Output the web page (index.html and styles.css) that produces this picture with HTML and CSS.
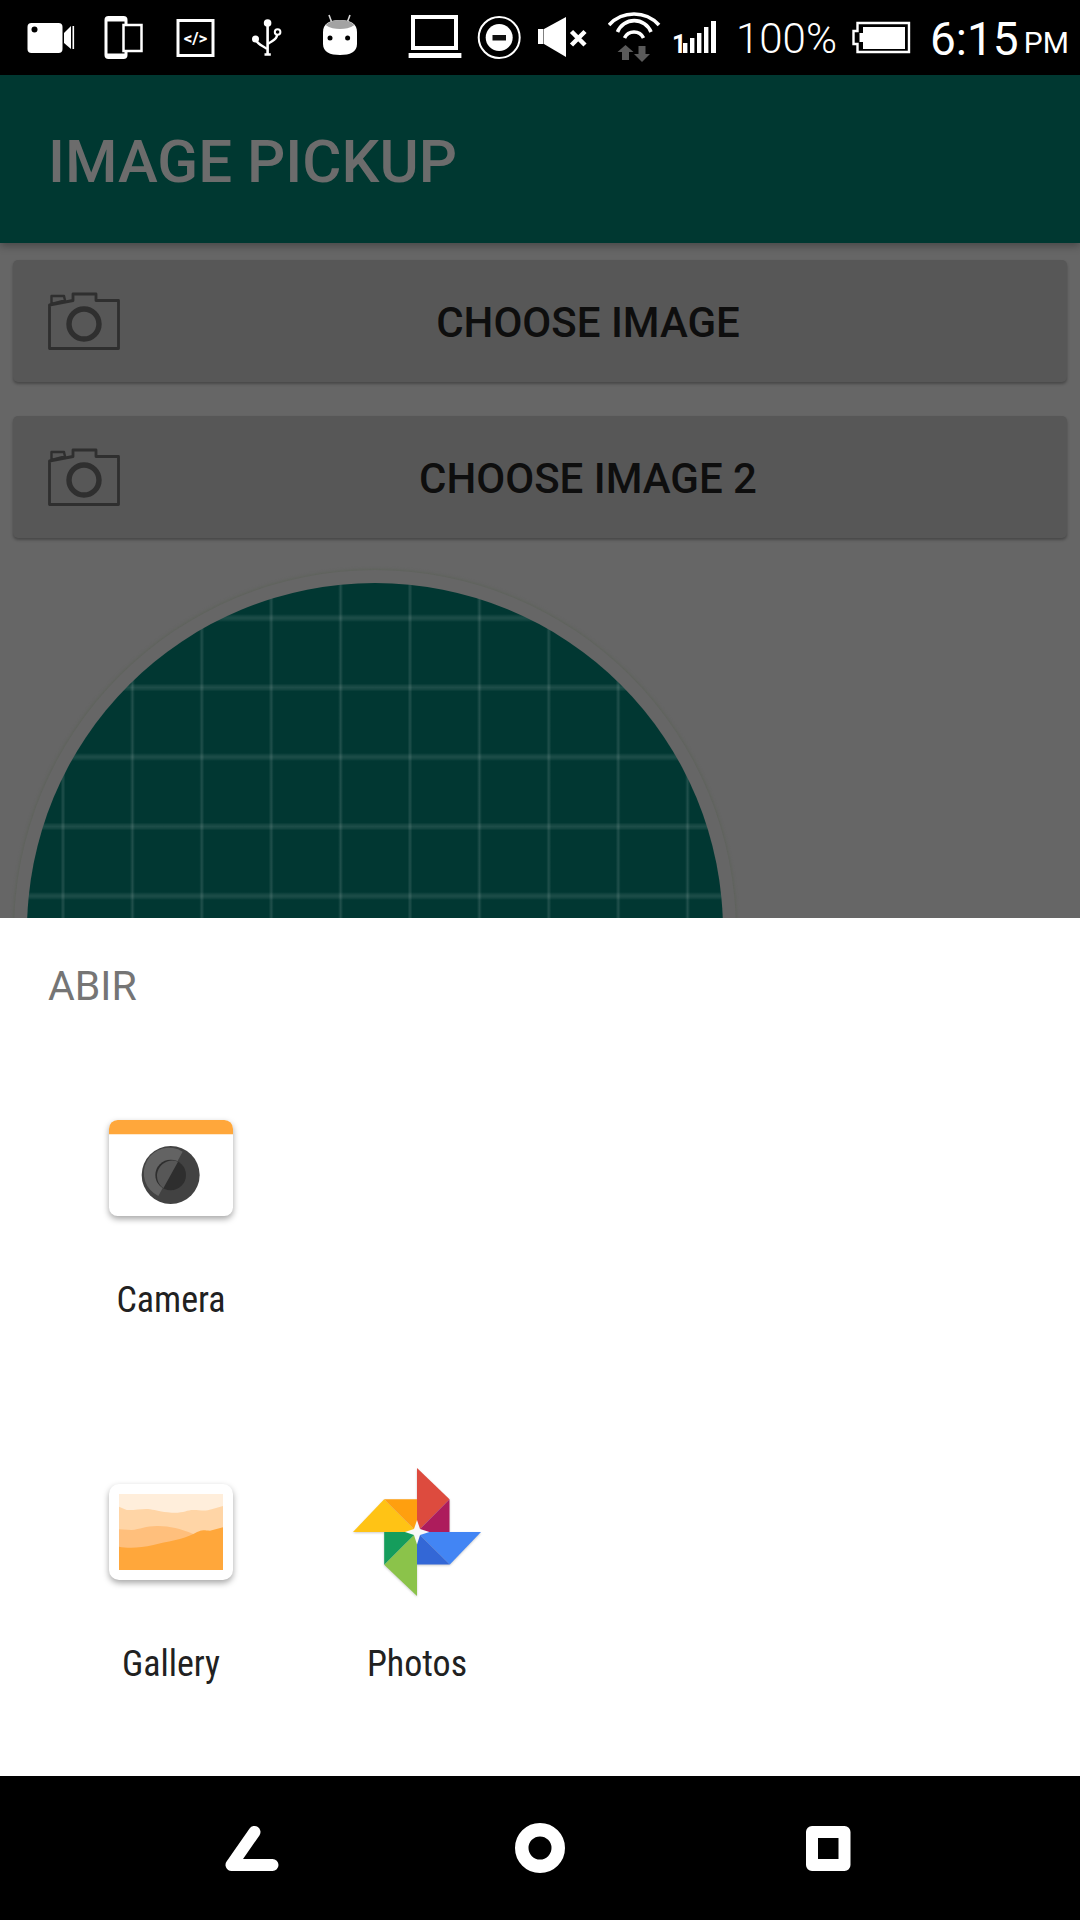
FILE: index.html
```html
<!DOCTYPE html>
<html lang="en">
<head>
    <meta charset="UTF-8">
    <meta name="viewport" content="width=device-width, initial-scale=1.0">
    <title>Image Pickup</title>
    <link rel="stylesheet" href="styles.css">
</head>
<body>
    <div class="status-bar">
        <svg class="st st-video" width="48" height="75" viewBox="0 0 48 75">
            <rect x="0.5" y="23" width="35" height="30" rx="4" fill="#fff"/>
            <circle cx="7.5" cy="29.5" r="3" fill="#000"/>
            <polygon points="37,33 44,26 44,49 37,43" fill="#fff"/>
            <rect x="45.5" y="26" width="1.6" height="23" fill="#fff"/>
        </svg>
        <svg class="st st-phone" width="39" height="75" viewBox="0 0 39 75">
            <rect x="0.5" y="16" width="23" height="43" rx="4" fill="#fff"/>
            <rect x="3.5" y="21.5" width="17" height="32" fill="#000"/>
            <rect x="19.5" y="25" width="18" height="26" fill="#000" stroke="#fff" stroke-width="2.5"/>
        </svg>
        <svg class="st st-code" width="39" height="75" viewBox="0 0 39 75">
            <rect x="2" y="20.5" width="35" height="35" fill="none" stroke="#fff" stroke-width="3"/>
            <text x="19.5" y="44" class="code-text">&lt;/&gt;</text>
        </svg>
        <svg class="st st-usb" width="30" height="75" viewBox="0 0 30 75">
            <circle cx="15.6" cy="23" r="3.8" fill="#fff"/>
            <path d="M15.6 24V54M12.5 54.5H18.8" stroke="#fff" stroke-width="2.6" fill="none"/>
            <circle cx="3.5" cy="39" r="3.5" fill="#fff"/>
            <path d="M4 40C6 45 12 46 15 49" stroke="#fff" stroke-width="2.4" fill="none"/>
            <circle cx="25.6" cy="32" r="2.8" fill="none" stroke="#fff" stroke-width="2"/>
            <path d="M25 35C25 40 19 41 16 44" stroke="#fff" stroke-width="2.4" fill="none"/>
        </svg>
        <svg class="st st-android" width="36" height="75" viewBox="0 0 36 75">
            <path d="M7 15L10 23M28 15L25 23" stroke="#d9d9d9" stroke-width="1.6"/>
            <path d="M1 32C1 24 7 20 18 20S35 24 35 32V44C35 52 28 55 18 55S1 52 1 44Z" fill="#fff"/>
            <path d="M3.5 25C7 21.5 12 20 18 20S29 21.5 32.5 25C28 28 23 29 18 29S8 28 3.5 25Z" fill="#a3a3a3"/>
            <circle cx="8" cy="38" r="2.5" fill="#000"/>
            <circle cx="25.6" cy="38" r="2.5" fill="#000"/>
        </svg>
        <svg class="st st-laptop" width="54" height="75" viewBox="0 0 54 75">
            <rect x="5" y="17" width="43" height="31" fill="none" stroke="#fff" stroke-width="4"/>
            <rect x="0.6" y="53" width="52.8" height="5" fill="#fff"/>
        </svg>
        <svg class="st st-dnd" width="45" height="75" viewBox="0 0 45 75">
            <circle cx="22.2" cy="37.5" r="20.5" fill="none" stroke="#fff" stroke-width="2"/>
            <circle cx="22.2" cy="37.5" r="13.5" fill="#fff"/>
            <rect x="15.5" y="35" width="13.5" height="5.5" fill="#111"/>
        </svg>
        <svg class="st st-mute" width="50" height="75" viewBox="0 0 50 75">
            <rect x="0" y="29" width="5.5" height="15" fill="#fff"/>
            <polygon points="6,29 28,17 28,57 6,44" fill="#fff"/>
            <path d="M33.5 31.5L47 45M47 31.5L33.5 45" stroke="#fff" stroke-width="4.5"/>
        </svg>
        <svg class="st st-wifi" width="53" height="75" viewBox="0 0 53 75">
            <path d="M1 25A34 34 0 0 1 51 25M9.5 32A18 18 0 0 1 43 32M16.5 38A10.5 10.5 0 0 1 35.5 38" fill="none" stroke="#fff" stroke-width="3.6"/>
            <path d="M9.5 52L17.5 45L25.5 52H21V60H14V52Z" fill="#5a5a5a"/>
            <path d="M26 54H30.5V46H37.5V54H42L34 62Z" fill="#5a5a5a"/>
        </svg>
        <svg class="st st-signal" width="45" height="75" viewBox="0 0 45 75">
            <text x="0" y="53" class="signal-text">1</text>
            <rect x="11" y="43" width="4.4" height="10" fill="#fff"/>
            <rect x="18" y="38" width="4.4" height="15" fill="#fff"/>
            <rect x="25" y="33" width="4.4" height="20" fill="#fff"/>
            <rect x="32" y="27" width="4.4" height="26" fill="#fff"/>
            <rect x="39" y="21" width="5" height="32" fill="#fff"/>
        </svg>
        <span class="st-percent">100%</span>
        <svg class="st st-battery" width="59" height="75" viewBox="0 0 59 75">
            <path d="M5.5 23H57V52H5.5V44H1.5V31H5.5Z" fill="none" stroke="#fff" stroke-width="2.4"/>
            <path d="M11 27H53V49H11V42H7.5V33H11Z" fill="#fff"/>
        </svg>
        <span class="st-time">6:15</span>
        <span class="st-ampm">PM</span>
    </div>

    <header class="app-bar">IMAGE PICKUP</header>

    <main class="content">
        <button class="pick-btn">
            <svg class="cam-icon" width="72" height="58" viewBox="0 0 72 58">
                <path d="M1.5 13V56.5H70.5V8.5H48V2H25V8.5Z" fill="none" stroke="#2f2f2f" stroke-width="2.8" stroke-linejoin="round"/>
                <path d="M3.5 12V4H16L17 8.5Z" fill="none" stroke="#2f2f2f" stroke-width="2.4" stroke-linejoin="round"/>
                <circle cx="36" cy="32" r="15" fill="none" stroke="#2f2f2f" stroke-width="5.4"/>
            </svg>
            <span class="pick-label">CHOOSE IMAGE</span>
        </button>
        <button class="pick-btn">
            <svg class="cam-icon" width="72" height="58" viewBox="0 0 72 58">
                <path d="M1.5 13V56.5H70.5V8.5H48V2H25V8.5Z" fill="none" stroke="#2f2f2f" stroke-width="2.8" stroke-linejoin="round"/>
                <path d="M3.5 12V4H16L17 8.5Z" fill="none" stroke="#2f2f2f" stroke-width="2.4" stroke-linejoin="round"/>
                <circle cx="36" cy="32" r="15" fill="none" stroke="#2f2f2f" stroke-width="5.4"/>
            </svg>
            <span class="pick-label">CHOOSE IMAGE 2</span>
        </button>
        <div class="preview"></div>
    </main>

    <section class="sheet">
        <div class="sheet-title">ABIR</div>
        <div class="app-grid">
            <div class="app-item">
                <div class="app-icon">
                    <svg class="icon-shadow" width="124" height="96" viewBox="57 60 372 288">
                        <rect x="57" y="60" width="372" height="288" rx="26" fill="#fff"/>
                        <path d="M57 103V86A26 26 0 0 1 83 60H403A26 26 0 0 1 429 86V103Z" fill="#ffa73b"/>
                        <circle cx="242" cy="225" r="87" fill="#424242"/>
                        <path d="M278 155A76 76 0 1 0 205 288Z" fill="#636363"/>
                        <circle cx="242" cy="225" r="46" fill="#2e2e2e"/>
                        <path d="M264 185A46 46 0 0 0 220 265Z" fill="#575757"/>
                    </svg>
                </div>
                <div class="app-name">Camera</div>
            </div>
            <div class="app-item app-item-first">
                <div class="app-icon">
                    <svg class="icon-shadow" width="124" height="96" viewBox="57 72 372 288">
                        <rect x="57" y="72" width="372" height="288" rx="30" fill="#fff"/>
                        <rect x="87" y="102" width="312" height="228" fill="#ffeedb"/>
                        <path d="M87 140L110 150C130 152 160 145 180 148S210 156 245 158S290 150 310 150S345 155 365 148L399 138V330H87Z" fill="#ffd5a6"/>
                        <path d="M87 208L125 210C150 208 170 197 205 198S270 205 310 222L330 330H87Z" fill="#ffbf7c"/>
                        <path d="M87 260C110 265 150 265 190 255S280 238 310 222S340 212 360 212L399 202V330H87Z" fill="#ffa73b"/>
                    </svg>
                </div>
                <div class="app-name">Gallery</div>
            </div>
            <div class="app-item">
                <div class="app-icon">
                    <svg class="icon-shadow-soft" width="128" height="128" viewBox="40 40 382 382">
                        <polygon points="231,40 328,133 231,231" fill="#dd4b3e"/>
                        <polygon points="328,133 328,231 231,231" fill="#ad1c5c"/>
                        <polygon points="422,231 329,328 231,231" fill="#4285f4"/>
                        <polygon points="329,328 231,328 231,231" fill="#3367d6"/>
                        <polygon points="231,422 133,329 231,231" fill="#8bc34a"/>
                        <polygon points="133,329 133,231 231,231" fill="#159d5c"/>
                        <polygon points="40,231 133,133 231,231" fill="#ffc315"/>
                        <polygon points="133,133 231,133 231,231" fill="#ff9f0f"/>
                        <polygon points="231,195 240,222 268,231 240,240 231,268 222,240 195,231 222,222" fill="#f8f8f8"/>
                    </svg>
                </div>
                <div class="app-name">Photos</div>
            </div>
        </div>
    </section>

    <nav class="nav-bar">
        <svg width="60" height="60" viewBox="0 0 60 60">
            <path d="M32.5 14L9.5 47H50.5" fill="none" stroke="#fff" stroke-width="12" stroke-linecap="round" stroke-linejoin="round"/>
        </svg>
        <svg width="60" height="60" viewBox="0 0 60 60">
            <circle cx="30" cy="30" r="18.25" fill="none" stroke="#fff" stroke-width="13.5"/>
        </svg>
        <svg width="60" height="60" viewBox="0 0 60 60">
            <rect x="14" y="14" width="32.5" height="33" fill="none" stroke="#fff" stroke-width="12" stroke-linejoin="round"/>
        </svg>
    </nav>
</body>
</html>
```

FILE: styles.css
```css
* {
    box-sizing: border-box;
}

body {
    font-family: Roboto, sans-serif;
    margin: 0;
    padding: 0;
    width: 1080px;
    height: 1920px;
    overflow: hidden;
    display: flex;
    flex-direction: column;
    background-color: #666;
}

/* status bar, every svg is 75px tall so the y values are the real ones */
.status-bar {
    height: 75px;
    background-color: #000;
    color: #fff;
    display: flex;
    align-items: center;
    padding-left: 27px;
    flex-shrink: 0;
}

.st {
    display: block;
    flex-shrink: 0;
}

.st-phone { margin-left: 29px; }
.st-code { margin-left: 33px; }
.st-usb { margin-left: 37px; }
.st-android { margin-left: 40px; }
.st-laptop { margin-left: 50px; }
.st-dnd { margin-left: 15px; }
.st-mute { margin-left: 16px; }
.st-wifi { margin-left: 20px; }
.st-signal { margin-left: 11px; }
.st-battery { margin-left: 14px; }

.code-text {
    font-family: Roboto, sans-serif;
    font-size: 17px;
    font-weight: 700;
    fill: #fff;
    text-anchor: middle;
}

.signal-text {
    font-family: Roboto, sans-serif;
    font-size: 25px;
    font-weight: 700;
    fill: #fff;
}

.st-percent {
    margin-left: 19px;
    margin-top: 2px;
    font-size: 42px;
    font-weight: 300;
    width: 102px;
    white-space: nowrap;
}

.st-time {
    margin-left: 19px;
    margin-top: 2px;
    font-size: 46px;
    font-weight: 400;
}

.st-ampm {
    margin-left: 5px;
    margin-top: 10px;
    font-size: 30px;
    font-weight: 400;
}

.app-bar {
    height: 168px;
    flex-shrink: 0;
    background-color: #003831;
    color: #6c6c6c;
    font-size: 60px;
    font-weight: 500;
    display: flex;
    align-items: center;
    padding: 4px 0 0 48px;
    box-shadow: 0 3px 8px rgba(0, 0, 0, 0.3);
    position: relative;
}

.content {
    height: 675px;
    flex-shrink: 0;
    overflow: hidden;
    padding: 17px 13px 0;
}

.pick-btn {
    width: 100%;
    height: 122px;
    margin: 0 0 34px;
    padding: 0 11px 0 35px;
    border: 0;
    border-radius: 5px;
    background-color: #575757;
    box-shadow: 0 2px 3px rgba(0, 0, 0, 0.3);
    display: flex;
    align-items: center;
    font-family: Roboto, sans-serif;
}

.cam-icon {
    flex-shrink: 0;
}

.pick-label {
    flex: 1;
    padding-top: 3px;
    text-align: center;
    font-size: 42px;
    font-weight: 500;
    color: #0e0e0e;
}

.preview {
    width: 696px;
    height: 696px;
    margin: 45px 0 0 14px;
    border-radius: 50%;
    background-color: #013732;
    background-image:
        repeating-linear-gradient(90deg, transparent 0, transparent 33.5px, rgba(255, 255, 255, 0.12) 36px, transparent 38.5px, transparent 69.4px),
        repeating-linear-gradient(180deg, transparent 0, transparent 31px, rgba(255, 255, 255, 0.07) 33px, rgba(255, 255, 255, 0.11) 35px, rgba(255, 255, 255, 0.07) 37px, transparent 39px, transparent 69.5px);
    box-shadow: 0 0 0 13px #666, 0 0 3px 14px #5e635b;
}

.sheet {
    height: 858px;
    flex-shrink: 0;
    background-color: #fff;
    padding: 44px 48px 0;
    position: relative;
}

.sheet-title {
    font-size: 41px;
    line-height: 48px;
    color: #757575;
}

.app-grid {
    display: grid;
    grid-template-columns: repeat(4, 246px);
    row-gap: 146px;
    margin-top: 94px;
}

.app-item-first {
    grid-column: 1;
}

.app-icon {
    height: 128px;
    display: flex;
    align-items: center;
    justify-content: center;
}

.icon-shadow {
    filter: drop-shadow(0 3px 3px rgba(0, 0, 0, 0.35));
}

.icon-shadow-soft {
    filter: drop-shadow(0 1px 1px rgba(0, 0, 0, 0.2));
}

.app-name {
    margin-top: 46px;
    height: 44px;
    line-height: 44px;
    text-align: center;
    font-size: 36px;
    font-stretch: condensed;
    color: #212121;
}

.nav-bar {
    height: 144px;
    flex-shrink: 0;
    background-color: #000;
    display: flex;
    align-items: center;
    justify-content: center;
    gap: 228px;
}
```
